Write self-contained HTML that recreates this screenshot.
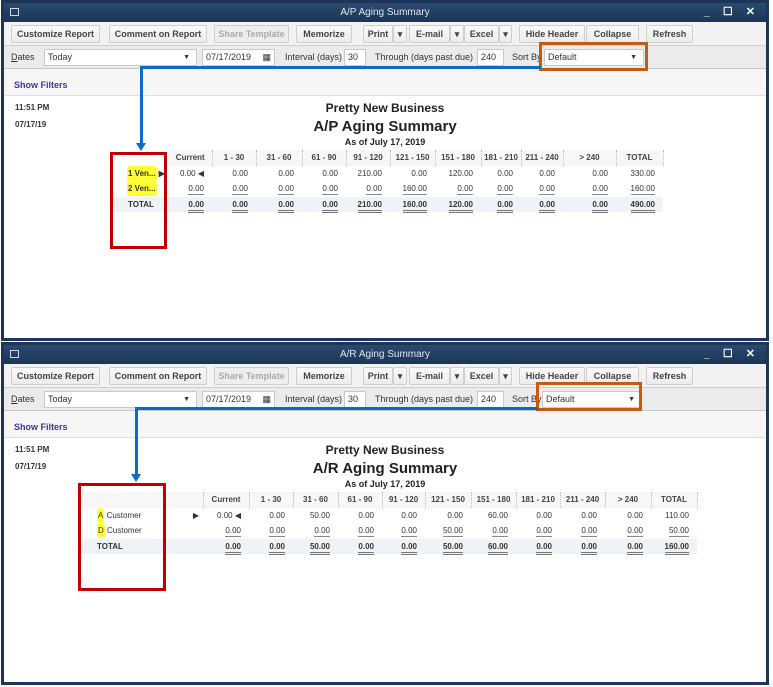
<!DOCTYPE html>
<html><head><meta charset="utf-8"><style>
*{margin:0;padding:0;box-sizing:border-box}
body{width:773px;height:687px;position:relative;background:#fff;font-family:"Liberation Sans",sans-serif;overflow:hidden;color:#222}
.win{position:absolute;left:1px;width:768px;border:3px solid #1d3658;background:#fff}
.tb{position:absolute;left:0;top:0;right:0;height:19px;background:linear-gradient(#2a4a70,#1b3556);color:#dfe6ef;font-size:10px;text-align:center;line-height:19px}
.tb .ic{position:absolute;left:6px;top:5px;width:9px;height:8px;border:1px solid #cfd8e3}
.tb .ctl{position:absolute;right:6px;top:0;font-size:11px;color:#fff;letter-spacing:5px;font-weight:bold}
.bar1{position:absolute;left:0;right:0;top:19px;height:24px;background:#f2f2f2;border-bottom:1px solid #cfcfcf}
.btn{position:absolute;top:3px;height:18px;border:1px solid #cfcfcf;background:linear-gradient(#fafafa,#ececec);font-size:9px;font-weight:bold;color:#444;text-align:center;line-height:16px;border-radius:2px}
.dis{color:#aaa;background:#eee}
.bar2{position:absolute;left:0;right:0;top:43px;height:23px;background:#ebebeb;border-bottom:1px solid #c8c8c8;font-size:9px;color:#333}
.bar2 span{position:absolute;top:6px}
.inp{position:absolute;top:3px;height:17px;background:#fff;border:1px solid #c9c9c9;font-size:9px;line-height:15px;padding-left:3px}
.filt{position:absolute;left:0;right:0;top:66px;height:27px;background:#f6f6f6;border-bottom:1px solid #e0e0e0;font-size:9px;font-weight:bold;color:#3a3a9a;padding:11px 0 0 10px}
.meta{position:absolute;left:11px;font-size:8px;font-weight:bold;color:#333}
.h{position:absolute;left:0;right:0;text-align:center;font-weight:bold;color:#222}
table{position:absolute;border-collapse:collapse;table-layout:fixed;font-size:8px;color:#333}
td{height:15.5px;text-align:right;padding-right:8px;white-space:nowrap}
tr.hd td{font-weight:bold;text-align:center;padding:0;color:#444;border-right:1px dotted #bbb;background:#f7f7f7}
tr.tot td{background:#eef3f8;font-weight:bold}
td.n{text-align:left;padding-left:2px;font-weight:bold}
.u{border-bottom:1px solid #888;padding-bottom:1px}
.dd{border-bottom:3px double #777;padding-bottom:1px}
.hl{background:#ffff33;padding:3px 1px;border-radius:3px}
.red{position:absolute;border:3px solid #c00000}
.org{position:absolute;border:3px solid #c55a11}
.bl{position:absolute;background:#0a6cc4}
.arr{position:absolute;width:0;height:0;border-left:5px solid transparent;border-right:5px solid transparent;border-top:8px solid #0a6cc4}
</style></head><body>

<!-- WINDOW 1 -->
<div class="win" style="top:0;height:341px">
<div class="tb"><div class="ic"></div>A/P Aging Summary<div class="ctl">_ ☐ ✕</div></div>
<div class="bar1">
<div class="btn" style="left:7px;width:89px">Customize Report</div>
<div class="btn" style="left:105px;width:98px">Comment on Report</div>
<div class="btn dis" style="left:210px;width:75px">Share Template</div>
<div class="btn" style="left:292px;width:56px">Memorize</div>
<div class="btn" style="left:359px;width:30px">Print</div><div class="btn" style="left:389px;width:14px">▾</div>
<div class="btn" style="left:405px;width:41px">E-mail</div><div class="btn" style="left:446px;width:14px">▾</div>
<div class="btn" style="left:460px;width:35px">Excel</div><div class="btn" style="left:495px;width:13px">▾</div>
<div class="btn" style="left:515px;width:66px">Hide Header</div>
<div class="btn" style="left:582px;width:53px">Collapse</div>
<div class="btn" style="left:642px;width:47px">Refresh</div>
</div>
<div class="bar2">
<span style="left:7px"><u>D</u>ates</span>
<div class="inp" style="left:40px;width:153px">Today<span style="right:6px;top:0;font-size:7px">▼</span></div>
<div class="inp" style="left:198px;width:73px">07/17/2019<span style="right:3px;top:0">▦</span></div>
<span style="left:281px">Interval (days)</span>
<div class="inp" style="left:340px;width:22px">30</div>
<span style="left:371px">Through (days past due)</span>
<div class="inp" style="left:473px;width:27px">240</div>
<span style="left:508px">Sort By</span>
<div class="inp" style="left:540px;width:100px">Default<span style="right:6px;top:0;font-size:7px">▼</span></div>
</div>
<div class="filt">Show Filters</div>
<div class="meta" style="top:100px">11:51 PM</div>
<div class="meta" style="top:117px">07/17/19</div>
<div class="h" style="top:98px;font-size:12px">Pretty New Business</div>
<div class="h" style="top:115px;font-size:15px">A/P Aging Summary</div>
<div class="h" style="top:134px;font-size:9px">As of July 17, 2019</div>
<table style="left:109px;top:147px;width:550px">
<col style="width:56px"><col style="width:43px"><col style="width:44px"><col style="width:46px"><col style="width:44px"><col style="width:44px"><col style="width:45px"><col style="width:46px"><col style="width:40px"><col style="width:42px"><col style="width:53px"><col style="width:47px">
<tr class="hd"><td style="border:0;background:#fff"></td><td>Current</td><td>1 - 30</td><td>31 - 60</td><td>61 - 90</td><td>91 - 120</td><td>121 - 150</td><td>151 - 180</td><td>181 - 210</td><td>211 - 240</td><td>&gt; 240</td><td>TOTAL</td></tr>
<tr><td class="n" style="padding-left:14px"><span class="hl">1 Ven...</span> ▶</td><td>0.00 ◀</td><td>0.00</td><td>0.00</td><td>0.00</td><td>210.00</td><td>0.00</td><td>120.00</td><td>0.00</td><td>0.00</td><td>0.00</td><td>330.00</td></tr>
<tr><td class="n" style="padding-left:14px"><span class="hl">2 Ven...</span></td><td><span class="u">0.00</span></td><td><span class="u">0.00</span></td><td><span class="u">0.00</span></td><td><span class="u">0.00</span></td><td><span class="u">0.00</span></td><td><span class="u">160.00</span></td><td><span class="u">0.00</span></td><td><span class="u">0.00</span></td><td><span class="u">0.00</span></td><td><span class="u">0.00</span></td><td><span class="u">160.00</span></td></tr>
<tr class="tot"><td class="n" style="padding-left:15px">TOTAL</td><td><span class="dd">0.00</span></td><td><span class="dd">0.00</span></td><td><span class="dd">0.00</span></td><td><span class="dd">0.00</span></td><td><span class="dd">210.00</span></td><td><span class="dd">160.00</span></td><td><span class="dd">120.00</span></td><td><span class="dd">0.00</span></td><td><span class="dd">0.00</span></td><td><span class="dd">0.00</span></td><td><span class="dd">490.00</span></td></tr>
</table>
</div>

<!-- WINDOW 2 -->
<div class="win" style="top:342px;height:343px">
<div class="tb"><div class="ic"></div>A/R Aging Summary<div class="ctl">_ ☐ ✕</div></div>
<div class="bar1">
<div class="btn" style="left:7px;width:89px">Customize Report</div>
<div class="btn" style="left:105px;width:98px">Comment on Report</div>
<div class="btn dis" style="left:210px;width:75px">Share Template</div>
<div class="btn" style="left:292px;width:56px">Memorize</div>
<div class="btn" style="left:359px;width:30px">Print</div><div class="btn" style="left:389px;width:14px">▾</div>
<div class="btn" style="left:405px;width:41px">E-mail</div><div class="btn" style="left:446px;width:14px">▾</div>
<div class="btn" style="left:460px;width:35px">Excel</div><div class="btn" style="left:495px;width:13px">▾</div>
<div class="btn" style="left:515px;width:66px">Hide Header</div>
<div class="btn" style="left:582px;width:53px">Collapse</div>
<div class="btn" style="left:642px;width:47px">Refresh</div>
</div>
<div class="bar2">
<span style="left:7px"><u>D</u>ates</span>
<div class="inp" style="left:40px;width:153px">Today<span style="right:6px;top:0;font-size:7px">▼</span></div>
<div class="inp" style="left:198px;width:73px">07/17/2019<span style="right:3px;top:0">▦</span></div>
<span style="left:281px">Interval (days)</span>
<div class="inp" style="left:340px;width:22px">30</div>
<span style="left:371px">Through (days past due)</span>
<div class="inp" style="left:473px;width:27px">240</div>
<span style="left:508px">Sort By</span>
<div class="inp" style="left:538px;width:100px">Default<span style="right:6px;top:0;font-size:7px">▼</span></div>
</div>
<div class="filt">Show Filters</div>
<div class="meta" style="top:100px">11:51 PM</div>
<div class="meta" style="top:117px">07/17/19</div>
<div class="h" style="top:98px;font-size:12px">Pretty New Business</div>
<div class="h" style="top:115px;font-size:15px">A/R Aging Summary</div>
<div class="h" style="top:134px;font-size:9px">As of July 17, 2019</div>
<table style="left:77px;top:147px;width:616px">
<col style="width:122px"><col style="width:46px"><col style="width:44px"><col style="width:45px"><col style="width:44px"><col style="width:43px"><col style="width:46px"><col style="width:45px"><col style="width:44px"><col style="width:45px"><col style="width:46px"><col style="width:46px">
<tr class="hd"><td style="border-right:1px dotted #bbb"></td><td>Current</td><td>1 - 30</td><td>31 - 60</td><td>61 - 90</td><td>91 - 120</td><td>121 - 150</td><td>151 - 180</td><td>181 - 210</td><td>211 - 240</td><td>&gt; 240</td><td>TOTAL</td></tr>
<tr><td class="n" style="padding-left:16px;font-weight:normal"><span class="hl">A</span> Customer<span style="float:right;margin-right:-4px">▶</span></td><td>0.00 ◀</td><td>0.00</td><td>50.00</td><td>0.00</td><td>0.00</td><td>0.00</td><td>60.00</td><td>0.00</td><td>0.00</td><td>0.00</td><td>110.00</td></tr>
<tr><td class="n" style="padding-left:16px;font-weight:normal"><span class="hl">D</span> Customer</td><td><span class="u">0.00</span></td><td><span class="u">0.00</span></td><td><span class="u">0.00</span></td><td><span class="u">0.00</span></td><td><span class="u">0.00</span></td><td><span class="u">50.00</span></td><td><span class="u">0.00</span></td><td><span class="u">0.00</span></td><td><span class="u">0.00</span></td><td><span class="u">0.00</span></td><td><span class="u">50.00</span></td></tr>
<tr class="tot"><td class="n" style="padding-left:16px">TOTAL</td><td><span class="dd">0.00</span></td><td><span class="dd">0.00</span></td><td><span class="dd">50.00</span></td><td><span class="dd">0.00</span></td><td><span class="dd">0.00</span></td><td><span class="dd">50.00</span></td><td><span class="dd">60.00</span></td><td><span class="dd">0.00</span></td><td><span class="dd">0.00</span></td><td><span class="dd">0.00</span></td><td><span class="dd">160.00</span></td></tr>
</table>
</div>

<!-- annotations -->
<div class="org" style="left:539px;top:42px;width:109px;height:29px"></div>
<div class="bl" style="left:141px;top:66px;width:400px;height:3px"></div>
<div class="bl" style="left:140px;top:66px;width:3px;height:78px"></div>
<div class="arr" style="left:136px;top:143px"></div>
<div class="red" style="left:110px;top:152px;width:57px;height:97px"></div>

<div class="org" style="left:536px;top:382px;width:106px;height:29px"></div>
<div class="bl" style="left:137px;top:407px;width:401px;height:3px"></div>
<div class="bl" style="left:135px;top:407px;width:3px;height:68px"></div>
<div class="arr" style="left:131px;top:474px"></div>
<div class="red" style="left:78px;top:483px;width:88px;height:108px"></div>
</body></html>
